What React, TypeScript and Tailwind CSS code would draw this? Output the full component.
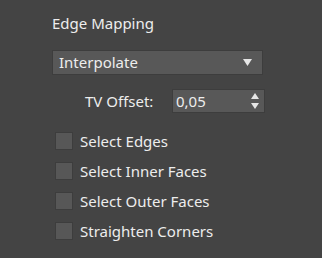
export default function App() {
  const items = ["Select Edges", "Select Inner Faces", "Select Outer Faces", "Straighten Corners"];
  return (
    <div
      className="w-[322px] h-[258px] bg-[#444444] text-[#ededed] pl-[52px] pt-[13px] flex flex-col text-[15px]"
      style={{ fontFamily: '"Noto Sans", "Open Sans", sans-serif' }}
    >
      <div className="h-[20px] leading-[20px]">Edge Mapping</div>
      <div className="mt-[17px] w-[211px] h-[25px] bg-[#585858] border border-[#3d3d3d] flex items-center justify-between pl-[6px] pr-[10px]">
        <span>Interpolate</span>
        <svg width="9" height="7" viewBox="0 0 9 7">
          <polygon points="0,0 9,0 4.5,7" fill="#e6e6e6" />
        </svg>
      </div>
      <div className="mt-[14px] flex items-center h-[24px]">
        <span className="ml-[33px] w-[87px]">TV Offset:</span>
        <div className="w-[93px] h-[24px] bg-[#585858] border border-[#3d3d3d] flex items-center justify-between pl-[3px] pr-[5px]">
          <span>0,05</span>
          <svg width="8" height="17" viewBox="0 0 8 17">
            <polygon points="4,0 8,6 0,6" fill="#e6e6e6" />
            <polygon points="0,10 8,10 4,16" fill="#e6e6e6" />
          </svg>
        </div>
      </div>
      <div className="mt-[13px] flex flex-col">
        {items.map((t) => (
          <div key={t} className="h-[30px] flex items-center">
            <div className="ml-[3px] w-[18px] h-[18px] bg-[#575757] border border-[#3d3d3d]" />
            <span className="ml-[7px]">{t}</span>
          </div>
        ))}
      </div>
    </div>
  );
}
